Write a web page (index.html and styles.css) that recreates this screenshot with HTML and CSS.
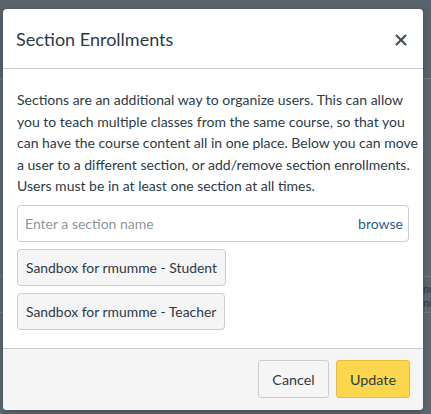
FILE: index.html
```html
<!DOCTYPE html>
<html>
<head>
<meta charset="utf-8">
<link rel="stylesheet" href="styles.css">
</head>
<body>
<div class="page">
  <div class="page-top"></div>
  <div class="page-gap"></div>
  <div class="page-row"><span class="frag">nu</span><span class="frag">nu</span></div>
</div>
<div class="modal">
  <div class="modal-header">
    <h2 class="modal-title">Section Enrollments</h2>
    <svg class="close" width="12" height="12" viewBox="0 0 12 12"><path d="M1.5 1.5 L10.5 10.5 M10.5 1.5 L1.5 10.5" stroke="#3d4a54" stroke-width="2" stroke-linecap="round"/></svg>
  </div>
  <div class="modal-body">
    <p class="intro">Sections are an additional way to organize users. This can allow<br>you to teach multiple classes from the same course, so that you<br>can have the course content all in one place. Below you can move<br>a user to a different section, or add/remove section enrollments.<br>Users must be in at least one section at all times.</p>
    <div class="search">
      <span class="placeholder">Enter a section name</span>
      <span class="browse">browse</span>
    </div>
    <div class="chips">
      <span class="chip">Sandbox for rmumme - Student</span>
      <span class="chip">Sandbox for rmumme - Teacher</span>
    </div>
  </div>
  <div class="modal-footer">
    <button class="btn">Cancel</button>
    <button class="btn primary">Update</button>
  </div>
</div>
</body>
</html>
```
FILE: styles.css
```css
html, body {
  margin: 0;
  padding: 0;
}
body {
  width: 431px;
  height: 414px;
  overflow: hidden;
  background: #5d6870;
  font-family: Lato, "Open Sans", sans-serif;
  color: #2d3b45;
  position: relative;
}
.page {
  display: flex;
  flex-direction: column;
}
.page-top {
  height: 78px;
  border-bottom: 1px solid #6e7a82;
  background: #58636b;
}
.page-gap {
  height: 197px;
  border-bottom: 1px solid #6e7a82;
}
.page-row {
  height: 36px;
  border-bottom: 1px solid #6e7a82;
  display: flex;
  flex-direction: column;
  align-items: flex-end;
  gap: 3px;
  padding-top: 6px;
  box-sizing: border-box;
}
.frag {
  font-size: 11px;
  line-height: 11px;
  color: #2a343a;
  width: 8px;
  overflow: hidden;
}
.modal {
  position: absolute;
  left: 3px;
  top: 9px;
  width: 420px;
  height: 401px;
  background: #fff;
  border-radius: 4px;
  display: flex;
  flex-direction: column;
  overflow: hidden;
  box-shadow: 0 2px 6px rgba(0,0,0,0.25);
}
.modal-header {
  height: 59px;
  flex: none;
  border-bottom: 1px solid #c7cdd1;
  display: flex;
  align-items: center;
  justify-content: space-between;
  padding: 0 16px 0 13px;
}
.modal-title {
  margin: 0;
  font-size: 18px;
  font-weight: 400;
  color: #2d3b45;
  padding-top: 1px;
}
.close {
  margin-top: 2px;
}
.modal-body {
  flex: 1;
  padding: 20px 14px 0 14px;
}
.intro {
  margin: 0 0 8px 0;
  font-size: 14px;
  line-height: 21.6px;
  color: #2d3b45;
  white-space: nowrap;
}
.search {
  height: 37px;
  box-sizing: border-box;
  border: 1px solid #c7cdd1;
  border-radius: 4px;
  display: flex;
  align-items: center;
  justify-content: space-between;
  padding: 0 5px 0 7px;
  font-size: 14px;
}
.placeholder {
  color: #8b969e;
}
.browse {
  color: #2d5b8e;
}
.chips {
  display: flex;
  flex-direction: column;
  align-items: flex-start;
  gap: 7px;
  margin-top: 7px;
}
.chip {
  height: 37px;
  box-sizing: border-box;
  display: flex;
  align-items: center;
  padding: 0 8px;
  white-space: nowrap;
  background: #f5f5f5;
  border: 1px solid #c7cdd1;
  border-radius: 4px;
  font-size: 13.9px;
  color: #2d3b45;
}
.modal-footer {
  height: 62px;
  flex: none;
  box-sizing: border-box;
  background: #f5f5f5;
  border-top: 1px solid #c7cdd1;
  display: flex;
  justify-content: flex-end;
  align-items: center;
  gap: 7px;
  padding: 0 13px 1px 0;
}
.btn {
  height: 38px;
  box-sizing: border-box;
  font-family: Lato, "Open Sans", sans-serif;
  font-size: 14.3px;
  color: #2d3b45;
  background: #f5f5f5;
  border: 1px solid #c7cdd1;
  border-radius: 3px;
  padding: 0;
  width: 71px;
}
.btn.primary {
  background: #fcd64c;
  border-color: #e3bd3c;
  width: 74px;
}
```
